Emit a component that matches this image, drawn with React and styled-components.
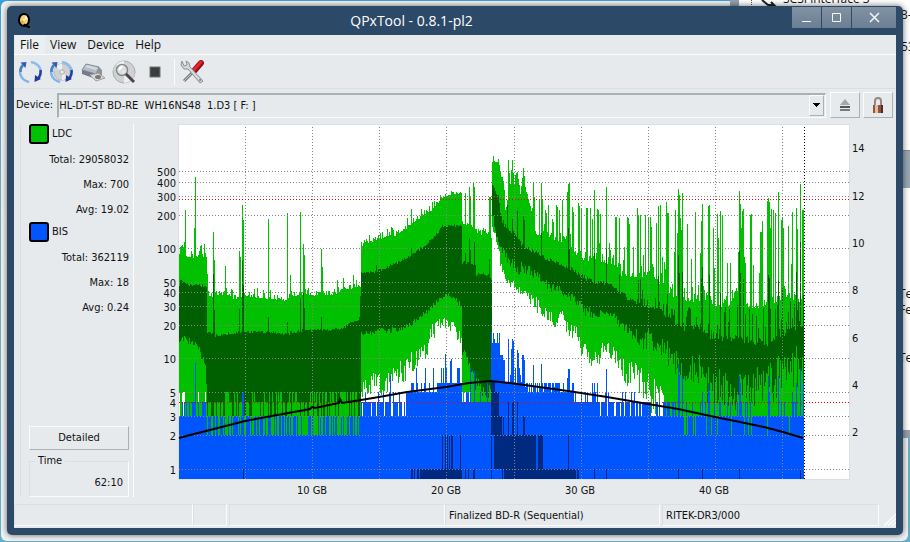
import React from 'react';
import styled, {createGlobalStyle} from 'styled-components';

const Colors = {
  frame: '#2c4968',
  face: '#e6eaed',
  light: '#fbfcfc',
  shade: '#d9dfe2',
  dark: '#a7b1b6',
  ldc: '#00c000',
  ldcAvg: '#006000',
  bis: '#0055ff',
  bisAvg: '#002a80',
  grid: '#868686'
};

const Fonts = {
  ui: `'DejaVu Sans Condensed', 'DejaVu Sans', sans-serif`,
  title: `'Open Sans', 'Noto Sans', sans-serif`
};

const GlobalStyle = createGlobalStyle`
* {
  box-sizing: border-box;
}
body {
  margin: 0;
  overflow: hidden;
  color: #111;
  font-family: ${Fonts.ui};
  font-size: 11px;
  line-height: 14px;
}
button, select {
  font: inherit;
  color: inherit;
}
`;

const Desktop = styled.div`
position: relative;
display: flex;
min-height: 100vh;
padding: 6px 7px 7px 7px;
background: linear-gradient(#3f9fd6, #74a9bd 40%, #5fb0cf);
overflow: hidden;
`;

const RearWindow = styled.div`
position: absolute;
top: 1px;
right: 2px;
bottom: 1px;
left: 1px;
border-radius: 6px;
background: #f2f2f2;
`;

const SideWindow = styled.div`
position: absolute;
top: -10px;
right: -20px;
left: 730px;
height: 448px;
border: solid #95a2af;
border-width: 0 0 8px 9px;
background: #fff;
font-family: ${Fonts.title};
font-size: 12px;
`;

const SideText = styled.span`
position: absolute;
top: ${props => props.$top}px;
left: ${props => props.$left}px;
white-space: nowrap;
`;

const TreeMark = styled.svg`
position: absolute;
top: 10px;
left: 10px;
width: 30px;
height: 7px;
`;

const SideBar = styled.div`
position: absolute;
top: 160px;
right: 0;
width: 30px;
height: 38px;
border-top: 1px solid #7d8b98;
background: #9aa8b5;
`;

const Window = styled.main`
position: relative;
display: flex;
flex: 1;
flex-direction: column;
min-width: 0;
padding: 0 7px 7px;
border-radius: 5px;
background: ${Colors.frame};
box-shadow: 0 0 6px rgba(0, 0, 0, 0.6);
`;

const TitleBar = styled.header`
display: grid;
grid-template-columns: 17px 1fr 104px;
height: 29px;
`;

const AppIcon = styled.svg`
width: 14px;
height: 16px;
margin: 7px 0 0 3px;
`;

const Title = styled.h1`
margin: 0;
color: #fff;
font-family: ${Fonts.title};
font-size: 14px;
font-weight: 400;
line-height: 30px;
text-align: center;
`;

const Controls = styled.div`
display: flex;
gap: 1px;
height: 21px;
margin-top: 1px;
`;

const ControlButton = styled.button`
display: flex;
flex: ${props => props.$wide ? 3 : 2} 1 0;
align-items: center;
justify-content: center;
padding: 0;
border: none;
background: linear-gradient(#8292a4, #6b7e93);
color: #f4f6f8;
`;

const Client = styled.div`
display: flex;
flex: 1;
flex-direction: column;
background: ${Colors.face};
`;

const MenuBar = styled.nav`
display: flex;
height: 20px;
padding-left: 1px;
border-bottom: 1px solid ${Colors.light};
font-family: ${Fonts.title};
font-size: 12px;
`;

const MenuItem = styled.button`
padding: 0 6px 0 5px;
border: none;
background: ${props => props.$active ? '#eceff1' : 'transparent'};
line-height: 18px;
`;

const ToolBar = styled.div`
display: flex;
align-items: center;
height: 34px;
padding: 0 1px;
border-bottom: 1px solid ${Colors.shade};
`;

const ToolButton = styled.button`
display: flex;
align-items: center;
justify-content: center;
width: 31px;
height: 30px;
padding: 0;
border: none;
background: transparent;
`;

const ToolSeparator = styled.span`
width: 1px;
height: 26px;
margin: 0 1px 0 4px;
background: ${Colors.light};
`;

const DeviceRow = styled.div`
display: flex;
align-items: center;
gap: 4px;
height: 30px;
padding: 2px 3px 0 2px;
`;

const ComboBox = styled.div`
position: relative;
flex: 1;
height: 25px;
border: solid;
border-width: 2px 1px 1px 2px;
border-color: ${Colors.dark} ${Colors.light} ${Colors.light} ${Colors.dark};
`;

const ComboSelect = styled.select`
width: 100%;
height: 100%;
padding: 0;
border: none;
outline: none;
appearance: none;
background: transparent;
`;

const ComboArrow = styled.span`
position: absolute;
top: 0;
right: 1px;
display: flex;
align-items: center;
justify-content: center;
width: 15px;
height: 21px;
border: 1px solid;
border-color: ${Colors.light} ${Colors.dark} ${Colors.dark} ${Colors.light};
background: ${Colors.face};
pointer-events: none;
`;

const RaisedButton = styled.button`
display: flex;
align-items: center;
justify-content: center;
width: ${props => props.$width};
height: ${props => props.$height};
padding: 0;
border: 1px solid;
border-color: ${Colors.light} ${Colors.dark} ${Colors.dark} ${Colors.light};
background: ${Colors.face};
`;

const ButtonPair = styled.div`
display: flex;
gap: 3px;
`;

const Body = styled.div`
display: flex;
padding-top: 5px;
`;

const SidePanel = styled.aside`
display: flex;
flex: none;
flex-direction: column;
width: 114px;
height: 373px;
margin-left: 6px;
padding-right: 4px;
padding-left: 8px;
border: solid;
border-width: 0 1px 0 1px;
border-color: ${Colors.shade} ${Colors.light} ${Colors.light} ${Colors.shade};
`;

const SeriesLabel = styled.label`
display: flex;
align-items: center;
gap: 3px;
height: 20px;
margin-bottom: 3px;
line-height: 20px;
`;

const Swatch = styled.input`
width: 20px;
height: 20px;
margin: 0;
border: 2px solid #000;
border-radius: 3px;
appearance: none;
background: ${props => props.$color};
`;

const Stat = styled.div`
height: 25px;
line-height: 25px;
text-align: right;
`;

const Spacer = styled.div`
flex: 1;
`;

const TimeBox = styled.fieldset`
min-width: 0;
height: 43px;
margin: 4px 0 0;
padding: 8px 5px 0;
border: 1px solid;
border-color: ${Colors.shade} ${Colors.light} ${Colors.light} ${Colors.shade};
text-align: right;
`;

const Legend = styled.legend`
margin-left: 0;
padding: 0 3px;
text-align: left;
`;

const ChartArea = styled.section`
flex: 1;
min-width: 0;
`;

const ChartSvg = styled.svg`
display: block;
width: 100%;
`;

const StatusBar = styled.footer`
display: grid;
grid-template-columns: 179fr 36fr 216fr 217fr 217fr 17px;
margin-top: auto;
padding-bottom: 2px;
`;

const StatusCell = styled.div`
height: 22px;
margin-right: ${props => props.$gap || 0}px;
padding-left: 3px;
border: 1px solid;
border-color: ${Colors.shade} ${Colors.light} ${Colors.light} ${Colors.shade};
line-height: 22px;
white-space: nowrap;
`;

const Grip = styled.svg`
align-self: end;
justify-self: end;
width: 13px;
height: 13px;
`;

// small repeatable generator, so the traces do not change between renders
const makeRandom = seed => {
  let state = seed;
  return () => {
    state = (state * 1664525 + 1013904223) % 4294967296;
    return state / 4294967296;
  };
};

// points are [x, y, jitter]
const sample = (points, x) => {
  let i = 0;
  while (i < points.length - 2 && points[i + 1][0] <= x) {
    i++;
  }
  const [x0, y0, jitter] = points[i];
  const [x1, y1] = points[i + 1];
  const t = Math.min(1, Math.max(0, (x - x0) / (x1 - x0 || 1)));
  return [y0 + (y1 - y0) * t, jitter];
};

const COLUMNS = 625;

const ldcTop = [
  [0, 130, 3], [1, 122, 5], [6, 126, 7], [7, 133, 8], [27, 132, 0], [28, 150, 3], [29, 168, 5],
  [31, 174, 8], [45, 171, 8], [60, 176, 8], [66, 172, 7], [104, 176, 9], [120, 171, 7], [155, 170, 7], [165, 165, 9],
  [181, 162, 10], [182, 121, 8], [201, 115, 8], [216, 111, 5], [228, 103, 8], [241, 93, 7],
  [254, 85, 8], [263, 73, 3], [271, 71, 5], [282, 68, 0], [283, 99, 4], [296, 104, 5], [297, 110, 9],
  [309, 110, 4], [311, 72, 0], [312, 113, 0], [313, 37, 4], [319, 38, 6], [321, 50, 8], [324, 56, 6],
  [326, 86, 4], [328, 80, 4], [329, 35, 0], [331, 60, 6], [333, 35, 0], [335, 60, 8], [338, 48, 4],
  [341, 70, 8], [344, 45, 6], [346, 64, 6], [350, 79, 8], [357, 112, 6], [365, 110, 18], [385, 120, 18],
  [402, 136, 14], [420, 137, 14], [435, 142, 12], [441, 151, 14], [470, 154, 14], [481, 160, 20],
  [494, 174, 12], [504, 176, 14], [528, 179, 12], [548, 184, 10], [558, 166, 8], [568, 184, 6],
  [588, 182, 10], [604, 175, 12], [624, 178, 12], [625, 178, 10]
];

const ldcSpikes = [
  [5, 117], [6, 85], [15, 103], [16, 52], [25, 119], [34, 107], [35, 135], [46, 141], [60, 126],
  [61, 132], [63, 80], [64, 95], [89, 94], [108, 88], [111, 150], [121, 87], [124, 119], [125, 130],
  [142, 124], [143, 142], [158, 155], [164, 153], [174, 150], [232, 84], [286, 68], [290, 62],
  [291, 72], [294, 58], [295, 62], [310, 72], [354, 58], [355, 72], [360, 74], [362, 58], [363, 74],
  [366, 85], [369, 80], [373, 94], [374, 97], [377, 80], [378, 82], [380, 85], [383, 75], [388, 67],
  [389, 59], [390, 58], [393, 82], [394, 87], [399, 78], [400, 81], [402, 83], [407, 83], [408, 83],
  [411, 83], [413, 94], [415, 65], [418, 84], [419, 85], [421, 89], [427, 62], [430, 118],
  [436, 92], [437, 92], [440, 93], [445, 122], [448, 92], [449, 93], [450, 99], [454, 122], [458, 83],
  [459, 90], [461, 90], [464, 130], [466, 90], [469, 92], [471, 92], [472, 102], [477, 98], [479, 81],
  [481, 80], [487, 77], [488, 88], [489, 88], [495, 127], [496, 85], [498, 108], [499, 64], [500, 70],
  [501, 93], [502, 105], [503, 68], [508, 99], [512, 134], [516, 87], [521, 128], [522, 96], [523, 79],
  [529, 81], [530, 80], [534, 103], [535, 143], [538, 89], [539, 113], [541, 86], [543, 91], [548, 138],
  [551, 138], [559, 127], [560, 66], [561, 79], [562, 103], [563, 86], [564, 84], [565, 132], [566, 138],
  [571, 90], [572, 89], [574, 140], [580, 148], [581, 107], [582, 107], [583, 96], [588, 76], [589, 73],
  [590, 77], [591, 103], [592, 84], [594, 85], [596, 88], [599, 67], [602, 95], [603, 93], [604, 103],
  [609, 101], [612, 139], [613, 87], [617, 83], [618, 104], [621, 59], [623, 85], [624, 85]
];

const avgTop = [
  [0, 162, 2], [1, 155, 2], [6, 159, 2], [8, 161, 3], [27, 162, 0], [28, 208, 3], [36, 212, 3],
  [48, 210, 3], [70, 208, 3], [110, 210, 4], [125, 207, 3], [150, 206, 2], [165, 204, 3], [170, 198, 1],
  [180, 196, 6], [182, 149, 2], [196, 148, 3], [211, 142, 3], [228, 134, 3], [241, 125, 3], [254, 115, 3],
  [263, 103, 3], [276, 102, 3], [282, 101, 0], [283, 139, 4], [296, 141, 3], [297, 151, 3], [310, 151, 0],
  [312, 155, 0], [313, 60, 2], [319, 74, 5], [321, 88, 4], [323, 98, 5], [328, 108, 6], [338, 114, 6],
  [344, 124, 4], [354, 128, 4], [368, 136, 4], [381, 141, 4], [394, 146, 4], [401, 153, 5], [414, 159, 4],
  [431, 161, 3], [441, 169, 5], [451, 178, 6], [461, 181, 22], [481, 187, 26], [489, 196, 26],
  [504, 206, 28], [521, 205, 30], [528, 215, 38], [544, 216, 38], [568, 219, 40], [587, 222, 38],
  [601, 213, 36], [614, 206, 34], [625, 203, 20]
];

const avgSpikes = [
  [34, 149], [35, 185], [60, 184], [63, 136], [64, 160], [89, 192], [108, 197], [121, 173], [124, 168],
  [125, 183], [142, 192], [197, 140], [232, 123], [286, 128], [290, 113], [291, 125], [295, 117],
  [310, 134], [328, 80], [333, 94], [338, 86], [344, 91], [345, 95], [362, 108], [363, 130], [389, 103],
  [390, 123], [415, 128], [427, 124], [440, 150], [459, 155], [461, 154], [479, 151], [499, 130],
  [500, 148], [503, 147], [522, 154], [523, 142], [530, 150], [541, 168], [560, 126], [561, 148],
  [564, 154], [589, 150], [590, 153], [599, 156], [603, 163], [617, 147], [621, 117]
];

const avgBottom = [
  [0, 214, 3], [2, 212, 3], [9, 216, 3], [17, 219, 4], [26, 240, 0], [28, 277, 0], [182, 208, 3],
  [224, 204, 3], [241, 192, 3], [258, 177, 3], [267, 169, 2], [276, 175, 4], [282, 182, 0],
  [283, 227, 4], [286, 230, 4], [291, 243, 5], [296, 258, 9], [311, 268, 8], [312, 291, 0],
  [313, 90, 4], [319, 118, 5], [324, 128, 6], [329, 137, 8], [344, 145, 6], [354, 148, 5], [361, 155, 5],
  [371, 162, 5], [381, 165, 5], [388, 172, 5], [396, 175, 5], [404, 185, 6], [418, 192, 7], [421, 188, 3],
  [434, 191, 4], [444, 203, 9], [461, 213, 12], [474, 217, 14], [488, 230, 14], [501, 242, 14],
  [521, 244, 10], [528, 258, 20], [560, 266, 22], [594, 256, 22], [604, 246, 22], [625, 240, 22]
];

const ldcBottom = [
  [182, 262, 12], [210, 257, 14], [228, 244, 16], [244, 228, 14], [254, 208, 10], [261, 199, 7],
  [269, 197, 8], [279, 208, 8], [282, 212, 2], [283, 284, 0], [313, 102, 3], [316, 110, 4], [319, 128, 6],
  [324, 148, 5], [331, 157, 7], [338, 165, 4], [348, 167, 8], [354, 177, 8], [361, 183, 7], [368, 190, 7],
  [376, 198, 6], [383, 190, 6], [388, 204, 7], [398, 209, 7], [402, 222, 12], [414, 234, 10],
  [428, 224, 8], [434, 230, 9], [444, 244, 16], [458, 256, 18], [468, 264, 22], [480, 274, 22], [492, 290, 20]
];

// count levels in [from, to, choices], drawn at random per column
const bisLevels = [
  [0, 28, [277, 277, 291, 277, 291]],
  [28, 182, [291, 291, 310, 291, 310, 310]],
  [182, 228, [277, 277, 277, 277, 291, 267]],
  [228, 258, [267, 267, 258, 267]],
  [258, 283, [258, 258, 258, 243]],
  [283, 313, [277, 277, 277, 277, 267]],
  [313, 321, [208, 218, 218, 214]],
  [321, 326, [230, 238, 235]],
  [326, 346, [257, 250, 258, 243]],
  [346, 380, [258, 262, 258, 267]],
  [380, 395, [267, 267, 258]],
  [395, 420, [277, 267, 277, 267, 277]],
  [420, 482, [277, 277, 277, 291, 267]],
  [482, 505, [291, 291, 277, 291]],
  [505, 625, [291, 291, 291, 291, 291, 277, 310, 291]]
];

const bisSpikes = [
  [16, 238], [63, 267], [64, 267], [211, 251], [237, 243], [246, 243], [254, 243], [266, 229], [271, 236],
  [272, 234], [279, 243], [291, 243], [295, 246], [308, 258], [312, 207], [329, 214], [332, 224], [333, 214],
  [334, 216], [338, 225], [339, 228], [343, 230], [344, 230], [345, 235], [354, 240], [362, 239],
  [388, 253], [389, 244], [390, 244], [413, 258], [415, 258], [418, 258], [427, 244], [499, 239],
  [500, 250], [503, 252], [523, 267], [529, 258], [530, 267], [560, 251], [561, 258], [589, 251],
  [590, 267], [599, 251], [613, 267], [617, 258], [621, 244], [624, 258]
];

// [x, width, top, bottom]
const bisAvgBlocks = [
  [64, 1, 344, 354], [232, 2, 344, 354], [235, 1, 344, 354], [238, 2, 344, 354], [241, 42, 344, 354],
  [263, 1, 310, 354], [266, 1, 310, 354], [268, 1, 310, 354], [270, 1, 310, 354], [272, 2, 310, 354],
  [281, 1, 310, 354], [286, 1, 344, 354], [289, 1, 344, 354], [294, 2, 344, 354], [312, 1, 257, 354],
  [313, 3, 257, 310], [316, 4, 267, 310], [320, 3, 291, 310], [324, 1, 291, 310], [315, 42, 310, 344],
  [329, 1, 277, 310], [333, 2, 277, 310], [338, 1, 277, 310], [344, 2, 291, 310], [359, 5, 310, 344],
  [389, 1, 310, 344], [323, 1, 344, 354], [325, 72, 344, 354], [398, 2, 344, 354], [415, 1, 344, 354],
  [427, 1, 344, 354], [499, 1, 344, 354], [523, 1, 344, 354], [560, 1, 344, 354], [621, 1, 344, 354]
];

const speedLine = `0,313 15,309 31,305 66,296 104,289 131,284 133,282 136,283 160,278 161,274
163,278 182,275 200,272 228,267 267,262 290,258 311,256 331,258 389,266 428,272 469,279 499,284
536,292 561,297 585,302 604,307 624,313`;

const column = (x, top, bottom) => `M${x} ${Math.round(top)}h1V${Math.round(bottom)}h-1z`;

const pickLevel = (table, x, random) => {
  const row = table.find(([from, to]) => x >= from && x < to);
  return row[2][Math.floor(random() * row[2].length)];
};

const buildTraces = () => {
  const random = makeRandom(7);
  const ldcPeaks = new Map(ldcSpikes);
  const avgPeaks = new Map(avgSpikes);
  const bisPeaks = new Map(bisSpikes);
  let ldc = '';
  let ldcAvg = '';
  let bis = '';

  for (let x = 0; x < COLUMNS; x++) {
    const [top, topJitter] = sample(ldcTop, x);
    const [mid, midJitter] = sample(avgTop, x);
    const [low, lowJitter] = sample(avgBottom, x);
    const peak = ldcPeaks.get(x) || top - topJitter * random() * random() * 1.6;
    // the right half of the average is ragged: short and tall columns mixed
    const reach = midJitter > 15 ? (random() < 0.4 ? random() : random() * 0.2) : random();
    const avgPeak = avgPeaks.get(x) || mid - midJitter * reach;

    let avgLow = low + lowJitter * (random() - 0.5) * 2;
    if (x >= 28 && x < 182) {
      avgLow = random() < 0.25 ? 291 : random() < (x > 125 ? 0.7 : 0.25) ? 267 : 277;
    }

    let bottom = 310;
    if (x < 28) {
      bottom = random() < 0.15 ? 267 : 291;
    } else if ((x >= 182 && x < 283) || (x >= 313 && x < 488)) {
      const [edge, edgeJitter] = sample(ldcBottom, x);
      bottom = edge + edgeJitter * (random() - 0.5) * 2;
    } else if (x >= 283 && x < 313) {
      bottom = x < 291 && random() < 0.4 ? 267 : 291;
    }

    ldc += column(x, peak, Math.max(bottom, avgLow));
    ldcAvg += column(x, Math.max(avgPeak, peak), avgLow);
    bis += column(x, bisPeaks.get(x) || pickLevel(bisLevels, x, random), 354);
  }

  const bisAvg = bisAvgBlocks.map(([x, w, y0, y1]) => `M${x} ${y0}h${w}V${y1}h-${w}z`).join('');
  return {ldc, ldcAvg, bis, bisAvg};
};

const traces = buildTraces();

const countTicks = [
  [500, 46], [400, 57], [300, 71], [200, 90], [100, 123], [50, 157], [40, 167], [30, 181],
  [20, 200], [10, 233], [5, 267], [4, 277], [3, 291], [2, 310], [1, 344]
];
const speedTicks = [[14, 23], [12, 71], [10, 118], [8, 165], [6, 213], [4, 260], [2, 307]];
const capacityTicks = [66, 133, 200, 267, 335, 402, 469, 536, 603];

const Chart = () => (
  <ChartSvg viewBox='0 0 762 376' role='img' aria-label='LDC and BIS error counts'>
    <rect x='44' y='0' width='672' height='356' fill={Colors.shade} />
    <g transform='translate(45 1)' shapeRendering='crispEdges'>
      <rect width='670' height='354' fill='#fff' />
      <path d={traces.ldc} fill={Colors.ldc} />
      <path d={traces.ldcAvg} fill={Colors.ldcAvg} />
      <path d={traces.bis} fill={Colors.bis} />
      <path d={traces.bisAvg} fill={Colors.bisAvg} />
      <g fill='none' stroke={Colors.grid} strokeDasharray='1 2'>
        {countTicks.filter(([n]) => n !== 4).map(([n, y]) => <path key={n} d={`M0 ${y + 0.5}H670`} />)}
        {capacityTicks.map(x => <path key={x} d={`M${x + 0.5} 2V354`} />)}
        <path d='M0 74.5H670M0 277.5H670' stroke='#f00000' />
        <path d='M625.5 2V354' stroke='#000' />
      </g>
      <polyline points={speedLine} fill='none' stroke='#000' strokeWidth='2' shapeRendering='auto' />
    </g>
    <g fill='#111'>
      {countTicks.map(([n, y]) => <text key={n} x='42' y={y + 6} textAnchor='end'>{n}</text>)}
      {speedTicks.map(([n, y]) => <text key={n} x='718' y={y + 5}>{n}</text>)}
      {[10, 20, 30, 40].map((n, i) => (
        <text key={n} x={178 + i * 134} y='370' textAnchor='middle'>{n} GB</text>
      ))}
    </g>
  </ChartSvg>
);

const Arrows = () => (
  <g fill='none' strokeWidth='2.500'>
    <path d='M10 22C1 20 -1 11 3 6' stroke='#7fb4ea' />
    <path d='M1.500 12C1.500 9 2 7 4 5' stroke='#4a80cc' />
    <path d='M12 2C21 4 24 11 20 18' stroke='#8dbbee' />
    <path d='M21.500 10C22 13 21 16 19 19' stroke='#24419c' />
    <path d='M1.500 2.500L7.500 2L6.500 8Z' fill='#2f5cb0' stroke='none' />
    <path d='M16 15L22 19L15.500 22Z' fill='#203c94' stroke='none' />
  </g>
);

const Disc = () => (
  <g>
    <circle cx='12' cy='12' r='11' fill='#cfd2d4' stroke='#a8abad' />
    <path d='M12 12L4 5A11 11 0 0 1 12 1Z' fill='#efefef' />
    <path d='M12 12L20 19A11 11 0 0 1 12 23Z' fill='#eeecec' />
    <path d='M12 12L1 10A11 11 0 0 1 4 5Z' fill='#c8dcd3' />
    <path d='M12 12L23 14A11 11 0 0 1 20 19Z' fill='#d9cbd9' />
    <circle cx='12' cy='12' r='3' fill='#e9edef' stroke='#999' />
  </g>
);

const Icon = ({children}) => <svg width='24' height='24' viewBox='0 0 24 24'>{children}</svg>;

const Tools = () => (
  <ToolBar role='toolbar'>
    <ToolButton aria-label='Rescan bus'><Icon><Arrows /></Icon></ToolButton>
    <ToolButton aria-label='Update media info'>
      <Icon><g transform='translate(3 3) scale(.75)'><Disc /></g><Arrows /></Icon>
    </ToolButton>
    <ToolButton aria-label='Device info'>
      <Icon>
        <path d='M5 4L18 7L15 14L1 10Z' fill='#b4bbc7' stroke='#858b96' />
        <path d='M6 5L17 8L15 10L4 7Z' fill='#d5dae2' />
        <path d='M1 10L15 14V19L1 14Z' fill='#777b83' />
        <path d='M15 14L18 7L21 10V17L15 19Z' fill='#8f949d' />
        <path d='M9 15L17 13L24 18L15 21Z' fill='#d9dadd' stroke='#9c9ea2' />
        <ellipse cx='17' cy='17' rx='3' ry='2' fill='#817875' />
      </Icon>
    </ToolButton>
    <ToolButton aria-label='Scan media'>
      <Icon>
        <Disc />
        <circle cx='10' cy='10' r='5.500' fill='#e2e6e7' fillOpacity='.8' stroke='#85898c' strokeWidth='1.500' />
        <path d='M7 10L10 6' stroke='#fff' strokeWidth='2' />
        <path d='M14 14L22 22' stroke='#44484b' strokeWidth='3' />
      </Icon>
    </ToolButton>
    <ToolButton aria-label='Stop'>
      <Icon><rect x='7' y='7' width='10' height='10' fill='#3b3e3e' stroke='#717475' /></Icon>
    </ToolButton>
    <ToolSeparator />
    <ToolButton aria-label='Preferences'>
      <Icon>
        <path d='M4 21L14 11' stroke='#777b7d' strokeWidth='3' />
        <path d='M4 21L14 11' stroke='#c5c9cb' />
        <path d='M14 11L21 3' stroke='#8e0f17' strokeWidth='6' strokeLinecap='round' />
        <path d='M14 10L21 2' stroke='#e02630' strokeWidth='3' strokeLinecap='round' />
        <path d='M2 1L1 5L4 9L8 9L20 23L23 21L10 7L9 3L6 1L7 5L4 6Z' fill='#d6d9da' stroke='#8b8f91' />
        <circle cx='20' cy='20' r='1' fill='#777' />
      </Icon>
    </ToolButton>
  </ToolBar>
);

const Series = ({name, color, total, max, avg}) => (
  <div>
    <SeriesLabel>
      <Swatch type='checkbox' defaultChecked $color={color} />
      {name}
    </SeriesLabel>
    <Stat>Total: {total}</Stat>
    <Stat>Max: {max}</Stat>
    <Stat>Avg: {avg}</Stat>
  </div>
);

const App = () => (
  <Desktop>
    <GlobalStyle />
    <RearWindow />
    <SideWindow>
      <TreeMark viewBox='0 0 30 7'>
        <path d='M2.500 0V7' stroke='#555' strokeDasharray='1 1' />
        <path d='M13 0L19 5H25L22 2' fill='none' stroke='#222' strokeWidth='2' />
      </TreeMark>
      <SideText $top={2} $left={44}>SCSI interface 3</SideText>
      <SideText $top={18} $left={162}>3-I</SideText>
      <SideText $top={50} $left={162}>53</SideText>
      <SideBar />
      <SideText $top={297} $left={160}>Te</SideText>
      <SideText $top={313} $left={160}>Fe</SideText>
      <SideText $top={361} $left={160}>Te</SideText>
    </SideWindow>
    <Window>
      <TitleBar>
        <AppIcon viewBox='0 0 14 16'>
          <ellipse cx='7' cy='7' rx='5' ry='6' fill='#f8d275' stroke='#000' strokeWidth='2' />
          <path d='M3 8L7 7L6 12Z' fill='#f5a52d' />
          <path d='M7 7L9 2L11 6Z' fill='#fff3d0' />
          <circle cx='7' cy='7' r='1' fill='#fff' />
          <path d='M7 11Q9 14 13 14' fill='none' stroke='#000' strokeWidth='2' />
        </AppIcon>
        <Title>QPxTool - 0.8.1-pl2</Title>
        <Controls>
          <ControlButton aria-label='Minimize'>
            <svg width='11' height='11'><path d='M1 9.500H10' stroke='currentColor' /></svg>
          </ControlButton>
          <ControlButton aria-label='Maximize'>
            <svg width='11' height='11'><path d='M1.500 1.500H9.500V9.500H1.500Z' fill='none' stroke='currentColor' /></svg>
          </ControlButton>
          <ControlButton $wide aria-label='Close'>
            <svg width='11' height='11'><path d='M1 1L10 10M10 1L1 10' stroke='currentColor' strokeWidth='1.500' /></svg>
          </ControlButton>
        </Controls>
      </TitleBar>
      <Client>
        <MenuBar>
          <MenuItem $active>File</MenuItem>
          <MenuItem>View</MenuItem>
          <MenuItem>Device</MenuItem>
          <MenuItem>Help</MenuItem>
        </MenuBar>
        <Tools />
        <DeviceRow>
          <label htmlFor='device'>Device:</label>
          <ComboBox>
            <ComboSelect id='device'>
              <option>{'HL-DT-ST BD-RE\u00a0 WH16NS48\u00a0 1.D3 [ F: ]'}</option>
            </ComboSelect>
            <ComboArrow>
              <svg width='7' height='4' shapeRendering='crispEdges'><path d='M0 0H7L4 4H3Z' fill='#000' /></svg>
            </ComboArrow>
          </ComboBox>
          <ButtonPair>
            <RaisedButton $width='30px' $height='26px' aria-label='Eject'>
              <svg width='12' height='13'>
                <path d='M6 0L11 6H1Z' fill='#a2a7a9' />
                <path d='M1 7H11V9H1Z' fill='#555' />
                <path d='M1 10H11V12H1Z' fill='#777b7d' />
              </svg>
            </RaisedButton>
            <RaisedButton $width='30px' $height='26px' aria-label='Lock'>
              <svg width='12' height='17'>
                <path d='M3 9V4Q3 1 6 1T9 4V9' fill='none' stroke='#8f8a86' strokeWidth='2' />
                <path d='M1 8H11V16H1Z' fill='#8d5440' />
                <path d='M3 8H6V16H3Z' fill='#e3bd9a' />
                <path d='M9 8H11V16H9Z' fill='#56291e' />
              </svg>
            </RaisedButton>
          </ButtonPair>
        </DeviceRow>
        <Body>
          <SidePanel>
            <Series name='LDC' color={Colors.ldc} total='29058032' max='700' avg='19.02' />
            <Series name='BIS' color={Colors.bis} total='362119' max='18' avg='0.24' />
            <Spacer />
            <RaisedButton $width='100%' $height='24px'>Detailed</RaisedButton>
            <TimeBox>
              <Legend>Time</Legend>
              62:10
            </TimeBox>
          </SidePanel>
          <ChartArea>
            <Chart />
          </ChartArea>
        </Body>
        <StatusBar>
          <StatusCell />
          <StatusCell $gap={2} />
          <StatusCell />
          <StatusCell $gap={2}>Finalized BD-R (Sequential)</StatusCell>
          <StatusCell>RITEK-DR3/000</StatusCell>
          <Grip viewBox='0 0 13 13'>
            <path d='M1 13L13 1M5 13L13 5M9 13L13 9' stroke={Colors.light} strokeWidth='1.500' />
          </Grip>
        </StatusBar>
      </Client>
    </Window>
  </Desktop>
);

export default App;
